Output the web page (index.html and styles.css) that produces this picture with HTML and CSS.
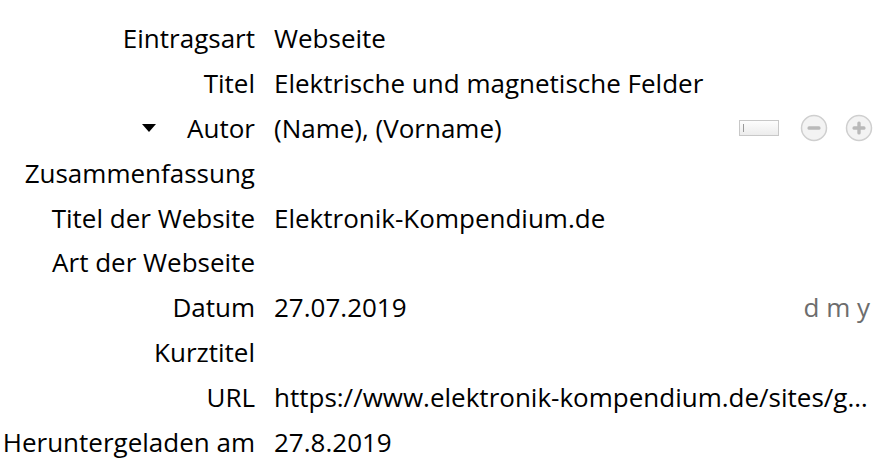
FILE: index.html
```html
<!DOCTYPE html>
<html lang="de">
<head>
    <meta charset="UTF-8">
    <title>Eintrag</title>
    <link rel="stylesheet" href="styles.css">
</head>
<body>
    <div class="item-pane">
        <div class="field-row">
            <div class="field-label">Eintragsart</div>
            <div class="field-value">Webseite</div>
        </div>
        <div class="field-row">
            <div class="field-label">Titel</div>
            <div class="field-value">Elektrische und magnetische Felder</div>
        </div>
        <div class="field-row">
            <div class="field-label"><span class="twisty"></span>Autor</div>
            <div class="field-value">
                <span class="value-text">(Name), (Vorname)</span>
                <span class="creator-buttons">
                    <span class="mode-switch"></span>
                    <svg class="round-btn" width="28" height="28" viewBox="0 0 28 28">
                        <circle cx="14" cy="14" r="12.5" fill="#f3f3f3" stroke="#cfcfcf" stroke-width="1.5"/>
                        <rect x="7.5" y="12.3" width="13" height="3.4" rx="1.5" fill="#b9b9b9"/>
                    </svg>
                    <svg class="round-btn" width="28" height="28" viewBox="0 0 28 28">
                        <circle cx="14" cy="14" r="12.5" fill="#f3f3f3" stroke="#cfcfcf" stroke-width="1.5"/>
                        <rect x="7.5" y="12.3" width="13" height="3.4" rx="1.5" fill="#b9b9b9"/>
                        <rect x="12.3" y="7.5" width="3.4" height="13" rx="1.5" fill="#b9b9b9"/>
                    </svg>
                </span>
            </div>
        </div>
        <div class="field-row">
            <div class="field-label">Zusammenfassung</div>
            <div class="field-value"></div>
        </div>
        <div class="field-row">
            <div class="field-label">Titel der Website</div>
            <div class="field-value">Elektronik-Kompendium.de</div>
        </div>
        <div class="field-row">
            <div class="field-label">Art der Webseite</div>
            <div class="field-value"></div>
        </div>
        <div class="field-row">
            <div class="field-label">Datum</div>
            <div class="field-value">
                <span class="value-text">27.07.2019</span>
                <span class="date-order">d m y</span>
            </div>
        </div>
        <div class="field-row">
            <div class="field-label">Kurztitel</div>
            <div class="field-value"></div>
        </div>
        <div class="field-row">
            <div class="field-label">URL</div>
            <div class="field-value"><span class="value-text">https://www.elektronik-kompendium.de/sites/grd/0110201.htm</span></div>
        </div>
        <div class="field-row">
            <div class="field-label">Heruntergeladen am</div>
            <div class="field-value">27.8.2019</div>
        </div>
    </div>
</body>
</html>
```

FILE: styles.css
```css
html, body { margin: 0; padding: 0; background: #fff; }
body { font-family: "Open Sans", "Noto Sans", sans-serif; font-size: 26px; color: #000; overflow: hidden; }

.item-pane { padding: 16px 11px 0 0; }
.field-row { display: grid; grid-template-columns: 255px 1fr; column-gap: 19px; height: 44.8px; align-items: center; }
.field-label { text-align: right; white-space: nowrap; display: flex; justify-content: flex-end; align-items: center; }
.field-value { display: flex; align-items: center; min-width: 0; white-space: nowrap; }
.value-text { flex: 1; min-width: 0; overflow: hidden; text-overflow: ellipsis; }

.twisty { width: 0; height: 0; border-left: 7px solid transparent; border-right: 7px solid transparent; border-top: 8px solid #000; margin-right: 31px; }

.creator-buttons { display: flex; align-items: center; gap: 17px; }
.mode-switch { width: 38px; height: 14px; border: 1px solid #c8c8c8; background: linear-gradient(#fdfdfd, #ececec); position: relative; margin-right: 4px; }
.mode-switch::before { content: ""; position: absolute; left: 3px; top: 3px; width: 1px; height: 8px; background: #999; }
.round-btn { display: block; }

.date-order { color: #6d6d6d; margin-right: 3px; }
```
